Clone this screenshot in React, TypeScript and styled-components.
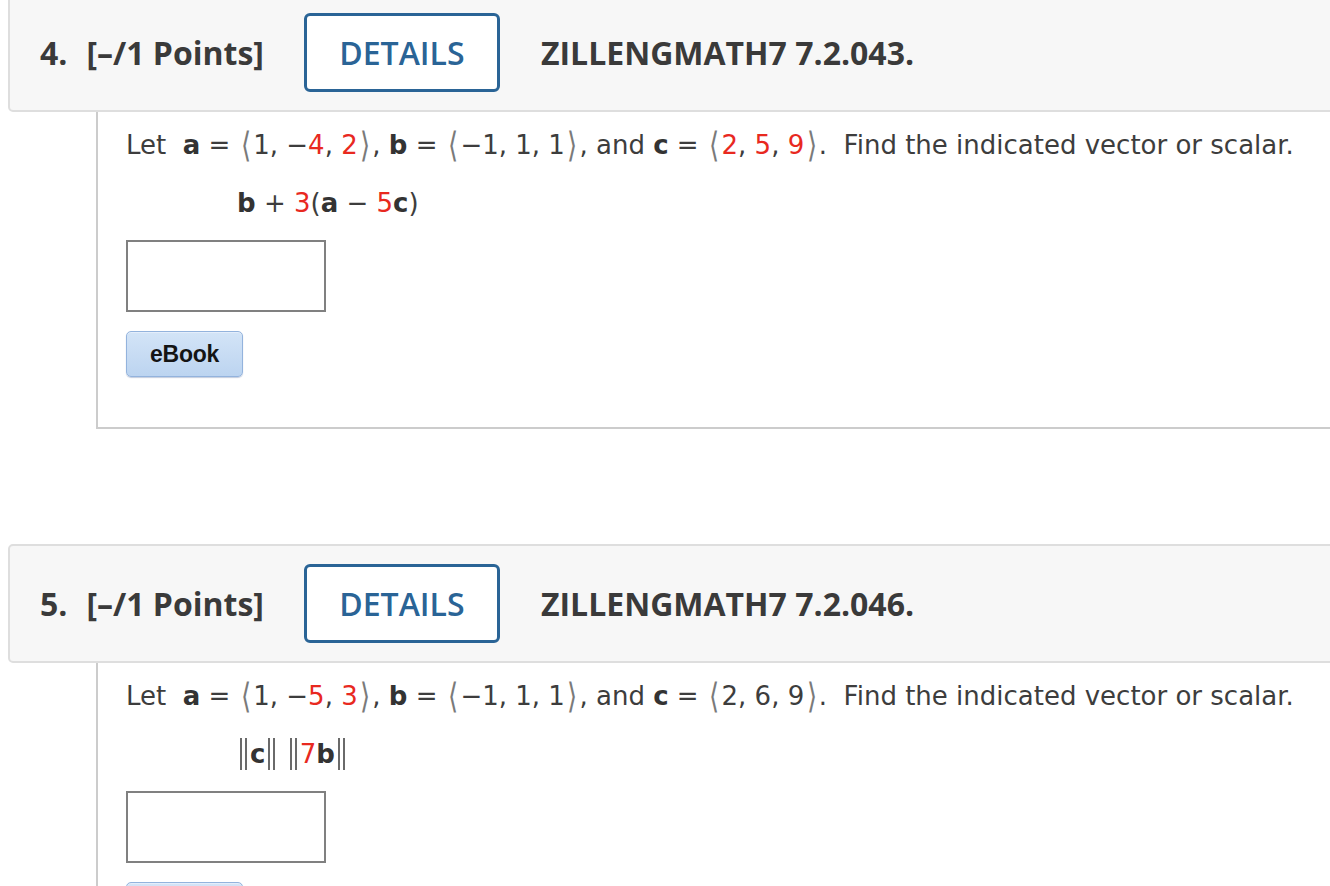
import React from "react";
import styled, { createGlobalStyle } from "styled-components";

const Global = createGlobalStyle`
  html, body { margin: 0; padding: 0; background: #ffffff; overflow: hidden; }
  body { width: 1330px; height: 886px; }
`;

const Page = styled.div`
  padding-left: 8px;
  margin-top: -7px;
  width: 1400px;
`;

const Question = styled.section<{ $first?: boolean }>`
  margin-top: ${(p) => (p.$first ? "0" : "115px")};
`;

const Header = styled.div`
  box-sizing: border-box;
  display: flex;
  align-items: center;
  height: 119px;
  padding-left: 30px;
  background: #f7f7f7;
  border: 2px solid #dedede;
  border-radius: 5px;
  font-family: "Open Sans", "Liberation Sans", sans-serif;
  color: #3a3a3a;
`;

const Num = styled.span`
  font-size: 32px;
  font-weight: 700;
`;

const Points = styled.span`
  margin-left: 19px;
  font-size: 32px;
  font-weight: 700;
`;

const DetailsButton = styled.button`
  box-sizing: border-box;
  margin-left: 40px;
  width: 196px;
  height: 79px;
  border: 3px solid #2a6496;
  border-radius: 6px;
  background: #ffffff;
  color: #2a6496;
  font-family: "Open Sans", "Liberation Sans", sans-serif;
  font-size: 32px;
  font-weight: 600;
  padding: 0;
  cursor: pointer;
`;

const Title = styled.span`
  margin-left: 41px;
  font-size: 32px;
  font-weight: 700;
`;

const Body = styled.div`
  box-sizing: border-box;
  margin-left: 88px;
  height: 317px;
  padding: 17px 0 0 28px;
  border-left: 2px solid #cccccc;
  border-bottom: 2px solid #cccccc;
  font-family: "DejaVu Sans", Verdana, sans-serif;
  font-size: 26px;
  color: #3d3d3d;
`;

const Line = styled.div`
  height: 32px;
  line-height: 32px;
  white-space: nowrap;
`;

const ExprLine = styled(Line)`
  margin-top: 26px;
  padding-left: 111px;
`;

const B = styled.b`
  font-weight: 700;
  color: #333333;
`;

const Red = styled.span`
  color: #e8291f;
`;

const Angle = styled.span`
  display: inline-block;
  color: #7a7a7a;
  font-family: "DejaVu Sans", sans-serif;
  font-weight: 300;
  transform: scaleY(1.35);
  margin: 0 2.3px;
`;

const Bars = styled.span`
  display: inline-block;
  box-sizing: border-box;
  width: 7px;
  height: 32px;
  margin: 0 3px;
  vertical-align: -7px;
  border-left: 2px solid #6a6a6a;
  border-right: 2px solid #6a6a6a;
`;

const AnswerBox = styled.input`
  box-sizing: border-box;
  display: block;
  margin-top: 21px;
  width: 200px;
  height: 72px;
  border: 2px solid #808080;
  background: #ffffff;
  outline: none;
`;

const EBook = styled.button`
  box-sizing: border-box;
  display: block;
  margin-top: 19px;
  width: 117px;
  height: 46px;
  padding: 0;
  border: 1px solid #93b3dd;
  border-radius: 5px;
  background: linear-gradient(#d3e4f7, #bcd4f0);
  box-shadow: inset 0 1px 0 #e4eefb, 0 1px 1px rgba(80, 110, 160, 0.35);
  font-family: "Liberation Sans", Arial, sans-serif;
  font-size: 23px;
  font-weight: 700;
  color: #141414;
  letter-spacing: -0.3px;
`;

const L = () => <Angle>⟨</Angle>;
const R = () => <Angle>⟩</Angle>;

type Vec = [React.ReactNode, React.ReactNode, React.ReactNode];

const VecText = ({ v }: { v: Vec }) => (
  <>
    <L />
    {v[0]}, {v[1]}, {v[2]}
    <R />
  </>
);

const Prompt = ({ a, c }: { a: Vec; c: Vec }) => (
  <Line>
    Let&nbsp; <B>a</B> = <VecText v={a} />, <B>b</B> ={" "}
    <VecText v={["−1", "1", "1"]} />, and <B>c</B> = <VecText v={c} />
    .&nbsp; Find the indicated vector or scalar.
  </Line>
);

export default function App() {
  return (
    <>
      <Global />
      <Page>
        <Question $first>
          <Header>
            <Num>4.</Num>
            <Points>[–/1 Points]</Points>
            <DetailsButton>DETAILS</DetailsButton>
            <Title>ZILLENGMATH7 7.2.043.</Title>
          </Header>
          <Body>
            <Prompt
              a={["1", <>−<Red>4</Red></>, <Red>2</Red>]}
              c={[<Red>2</Red>, <Red>5</Red>, <Red>9</Red>]}
            />
            <ExprLine>
              <B>b</B> + <Red>3</Red>(<B>a</B> − <Red>5</Red>
              <B>c</B>)
            </ExprLine>
            <AnswerBox type="text" />
            <EBook>eBook</EBook>
          </Body>
        </Question>
        <Question>
          <Header>
            <Num>5.</Num>
            <Points>[–/1 Points]</Points>
            <DetailsButton>DETAILS</DetailsButton>
            <Title>ZILLENGMATH7 7.2.046.</Title>
          </Header>
          <Body>
            <Prompt
              a={["1", <>−<Red>5</Red></>, <Red>3</Red>]}
              c={["2", "6", "9"]}
            />
            <ExprLine>
              <Bars />
              <B>c</B>
              <Bars />
              &nbsp;
              <Bars />
              <Red>7</Red>
              <B>b</B>
              <Bars />
            </ExprLine>
            <AnswerBox type="text" />
            <EBook>eBook</EBook>
          </Body>
        </Question>
      </Page>
    </>
  );
}
